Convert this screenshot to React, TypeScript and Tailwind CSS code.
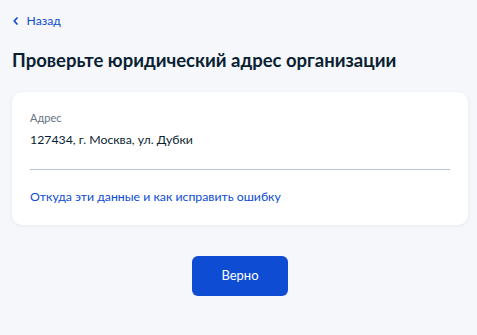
export default function App() {
  return (
    <div className="min-h-[335px] bg-[#f5f7fb] pl-3 pr-[9px] pt-[12px] font-['Lato',sans-serif] text-[#0b1f33]">
      <a href="#" className="flex h-[18px] items-center gap-[8px] text-[12.2px] text-[#0d4cd3]">
        <svg width="5" height="8" viewBox="0 0 5 8" fill="none" className="ml-[0.5px]">
          <path d="M4 1 1.2 4 4 7" stroke="#0d4cd3" strokeWidth="1.7" strokeLinecap="round" strokeLinejoin="round" />
        </svg>
        <span className="ml-[1px]">Назад</span>
      </a>
      <h1 className="mt-[19px] text-[18.5px] font-bold leading-[22px]">Проверьте юридический адрес организации</h1>
      <div className="mt-[21px] rounded-[10px] bg-white px-[18px] pb-[19px] pt-[17px] shadow-[0_1px_4px_rgba(11,31,51,0.06)]">
        <div className="text-[11px] leading-[18px] text-[#66727f]">Адрес</div>
        <div className="mt-[3px] text-[12.3px] leading-[20px]">127434, г. Москва, ул. Дубки</div>
        <div className="mt-[19px] h-px bg-[#b8c5da]" />
        <a href="#" className="mt-[18px] block text-[12.3px] leading-[18px] text-[#0d4cd3]">
          Откуда эти данные и как исправить ошибку
        </a>
      </div>
      <div className="mt-[31px] flex justify-center">
        <button className="h-[40px] w-[96px] rounded-[6px] bg-[#0d4cd3] text-[13px] text-white">Верно</button>
      </div>
    </div>
  );
}
